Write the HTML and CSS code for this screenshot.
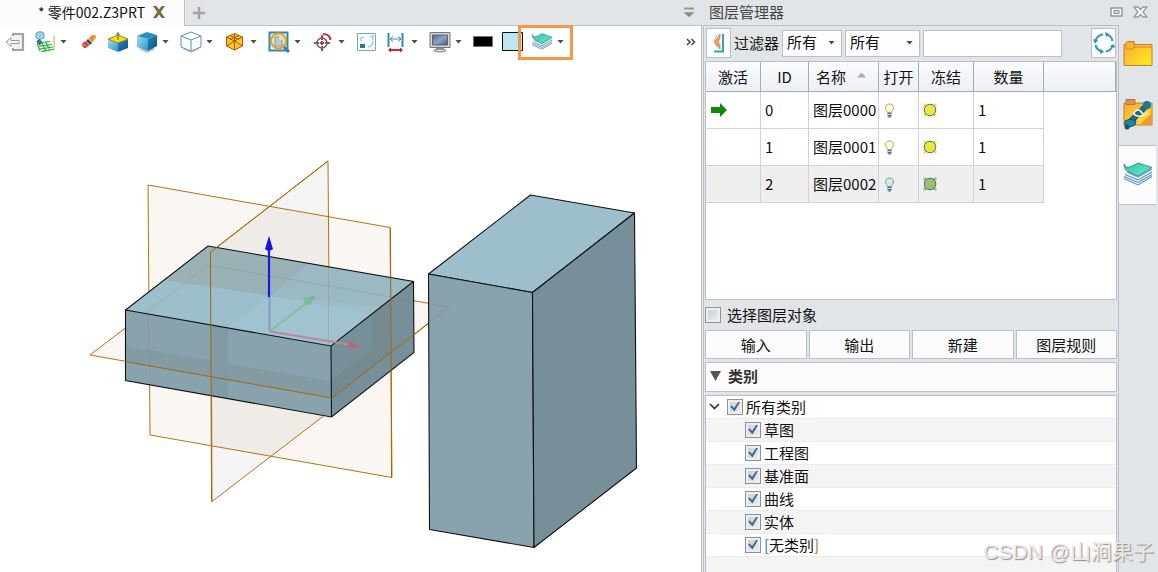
FILE: index.html
```html
<!DOCTYPE html>
<html lang="zh-CN">
<head>
<meta charset="utf-8">
<title>零件002.Z3PRT</title>
<link rel="stylesheet" href="styles.css">
</head>
<body>
<svg class="defs" aria-hidden="true">
  <defs>
    <linearGradient id="gSheet" x1="0" y1="0" x2="1" y2="1"><stop offset="0" stop-color="#2fc4a4"/><stop offset="1" stop-color="#6fe9d0"/></linearGradient>
    <linearGradient id="gFolder" x1="0" y1="0" x2="1" y2="1"><stop offset="0" stop-color="#fca63a"/><stop offset="1" stop-color="#fdee1c"/></linearGradient>
    <linearGradient id="gBlue" x1="0" y1="0" x2="1" y2="1"><stop offset="0" stop-color="#1c86bd"/><stop offset="1" stop-color="#0d5580"/></linearGradient>
    <linearGradient id="gFront" x1="0" y1="0" x2="1" y2="1"><stop offset="0" stop-color="#9fdcf2"/><stop offset="1" stop-color="#2e93c6"/></linearGradient>
    <linearGradient id="gScreen" x1="0" y1="0" x2="1" y2="1"><stop offset="0" stop-color="#4a6290"/><stop offset=".5" stop-color="#8fa3c6"/><stop offset="1" stop-color="#3f5684"/></linearGradient>
    <symbol id="stack" viewBox="0 0 30 24">
      <path d="M1 16l14 7 14-8V7L15 14 4 9z" fill="#e9f5fb"/>
      <path d="M4 10l11 5 14-8M2 12.500l13 5.500 14-8M1 14.500l14 6 14-8M1 16.500l14 6.500 14-8.500" fill="none" stroke="#5b93b5" stroke-width="1.100"/>
      <path d="M1 2c1 3 4 4 7 2.500l7-3.500 14 4.500L15 14 5 9.500C2 8 1 5 1 2z" fill="url(#gSheet)" stroke="#2a7f80" stroke-width=".8"/>
    </symbol>
    <symbol id="bulb" viewBox="0 0 11 15">
      <path d="M3.500 9.500C3.500 8 1.500 7 1.500 4.800c0-2.300 1.500-3.800 4-3.800s4 1.500 4 3.800c0 2.200-2 3.200-2 4.700z"/>
      <path d="M3.500 10h4v3.500h-4z" fill="#5c6787" stroke="none"/><path d="M3.500 11.500h4" stroke="#d5d9e4"/><path d="M4.500 14h2" stroke="#333c55"/>
    </symbol>
    <symbol id="sun" viewBox="0 0 14 14">
      <path d="M.5 .5h3v3h-3zM10.500 .5h3v3h-3zM.5 10.500h3v3h-3zM10.500 10.500h3v3h-3z" stroke="none"/>
      <circle cx="7" cy="7" r="5.800"/>
    </symbol>
  </defs>
</svg>

<main class="editor">
  <header class="tabs">
    <div class="tab"><span>* 零件002.Z3PRT</span>
      <button class="plain" aria-label="关闭标签"><svg width="12" height="12" viewBox="0 0 12 12"><path d="M0 0h3.500L6 3.500 8.500 0H12L7.800 6 12 12H8.500L6 8.500 3.500 12H0l4.200-6z" fill="#7b6c3e"/></svg></button>
    </div>
    <button class="plain tab-add" aria-label="新建标签"><svg width="12" height="12" viewBox="0 0 12 12"><path d="M6 0v12M0 6h12" stroke="#a8a29f" stroke-width="2.500"/></svg></button>
    <button class="plain tab-list" aria-label="标签列表"><svg width="12" height="11" viewBox="0 0 12 11"><path d="M1 1.500h10" stroke="#9a9696" stroke-width="2"/><path d="M1 5.500h10l-5 4.500z" fill="#8c8583" stroke="#aaa5a3"/></svg></button>
  </header>

  <nav class="toolbar" aria-label="工具栏">
    <button class="tool" aria-label="退出"><svg viewBox="0 0 22 22"><path d="M8 5V3h10v16H8v-2" fill="#f1f1f1" stroke="#a2a2a2" stroke-width="2.200"/><path d="M1 11l5-4.500V9.500h8v3H6v3z" fill="#f4f4f4" stroke="#9a9a9a"/></svg></button>
    <button class="tool combo" aria-label="基准面"><svg viewBox="0 0 22 22"><path d="M3 11l13-1 3 9-12 2z" fill="#e8f8e4"/><path d="M3 12l3 8M8 12l4 8.500M12 11.500l4 8M3 12l13-1.500M5 15l13-1.500M6 18l13-2M7 20.500l13-2" stroke="#2caf3c" stroke-width="1.200"/><path d="M20 5v13" stroke="#eebc76" stroke-width="1.500"/><path d="M2 2l4-1.500 4 1.500v5L6 8.500 2 7z" fill="#9fcfe4" stroke="#6aa5c0"/><path d="M4 9l3 4" stroke="#2c718e" stroke-width="4"/></svg><i class="arrow"></i></button>
    <button class="tool" aria-label="擦除"><svg viewBox="0 0 22 22"><path d="M6 12L14 4l4 0v4l-8 8z" fill="#f6c780"/><path d="M11 7L14.500 4 18 5 14 11z" fill="#d99140"/><path d="M9 9l4 4" stroke="#344a74" stroke-width="2.500"/><path d="M4 13l3-3 4 4-3 3c-2 1-4-2-4-4z" fill="#d5383d"/><path d="M5.500 13l2.500 2.500" stroke="#f5c2c2"/></svg></button>
    <button class="tool" aria-label="拉伸"><svg viewBox="0 0 22 22"><path d="M1 8l10 4v9L1 17z" fill="url(#gFront)"/><path d="M11 12l10-4v9l-10 4z" fill="url(#gBlue)"/><path d="M1 8l10-4 10 4-10 4z" fill="#f6de19" stroke="#a58222"/><path d="M11 9V2M9.500 3.500L11 1.500l1.500 2" stroke="#268540" fill="none"/></svg></button>
    <button class="tool combo" aria-label="着色显示"><svg viewBox="0 0 22 22"><path d="M2 18l9 4 9-4-8-2z" fill="#bfc4c6"/><path d="M1 5l11 3v12L1 16z" fill="url(#gFront)"/><path d="M12 8l9-4v11l-9 5z" fill="url(#gBlue)"/><path d="M1 5l10-4 10 3-9 4z" fill="#278fc4"/></svg><i class="arrow"></i></button>
    <button class="tool combo" aria-label="线框显示"><svg viewBox="0 0 22 22"><path d="M2 18l9 4 9-4-8-2z" fill="#c5c9cb"/><path d="M1 5l10-4 10 4v11l-10 4-10-4z" fill="#fbfdff" stroke="#6090af"/><path d="M1 5l10 4 10-4M11 9v11" fill="none" stroke="#6090af"/></svg><i class="arrow"></i></button>
    <button class="tool combo" aria-label="消隐显示"><svg viewBox="0 0 22 22"><path d="M2.500 6l8-3.500L18.500 6v9l-8 4-8-4z" fill="#fbc81f" stroke="#b5521c"/><path d="M2.500 6l8 4 8-4M10.500 2.500V19M2.500 15l8-5 8 5M6 4.500l9 4M15 4.500l-9 4" fill="none" stroke="#b5521c"/></svg><i class="arrow"></i></button>
    <button class="tool combo" aria-label="缩放"><svg viewBox="0 0 22 22"><path d="M1.500 1.500h18v18h-18z" fill="#e5f3f8" stroke="#3187ae" stroke-width="2"/><path d="M15 15l6 6" stroke="#397fa4" stroke-width="3"/><circle cx="10.500" cy="10" r="7.500" fill="#f7e6a4" stroke="#d8a52b" stroke-width="2"/><path d="M7 6h5l2 2v7H7z" fill="#b8c9d8" stroke="#8196ab"/><path d="M12 6v2h2" fill="none" stroke="#fff"/></svg><i class="arrow"></i></button>
    <button class="tool combo" aria-label="旋转中心"><svg viewBox="0 0 22 22"><circle cx="10" cy="12" r="5" fill="none" stroke="#3c6c91" stroke-width="1.500"/><path d="M10 4v5M10 15v5M2 12h5M13 12h5" stroke="#cb3a39" stroke-width="2"/><path d="M8 12h4M10 10v4" stroke="#cb3a39" stroke-width="2"/><path d="M11 3c4 0 7 2 7.500 6" fill="none" stroke="#d12e34" stroke-width="2"/></svg><i class="arrow"></i></button>
    <button class="tool" aria-label="视图"><svg viewBox="0 0 22 22"><path d="M1.500 2.500h18v17h-18z" fill="#fafdff" stroke="#7ba7bf"/><path d="M4 13h5v4H4z" fill="#2c779e"/><path d="M5 10V7l3-1M12 16c3 0 5-3 5-6M14 6l3-1v4" fill="none" stroke="#8dc8da" stroke-width="1.300"/></svg></button>
    <button class="tool combo" aria-label="标注"><svg viewBox="0 0 22 22"><path d="M3.500 2v14M17.500 2v14" stroke="#318ab1" stroke-width="2"/><path d="M5 8h11M8 5.500L5 8l3 2.500M13 5.500L16 8l-3 2.500" fill="none" stroke="#3c91b4"/><path d="M4 19h13" stroke="#d32c31" stroke-width="2"/><path d="M3 19l3-2.500v5zM18 19l-3-2.500v5z" fill="#b32229"/></svg><i class="arrow"></i></button>
    <button class="tool combo" aria-label="显示"><svg viewBox="0 0 22 22"><path d="M1 1.500h20v15H1z" fill="#d5d5d8" stroke="#77777c"/><path d="M3.500 4h15v10h-15z" fill="url(#gScreen)" stroke="#5d6068"/><path d="M7 17h8v2H7z" fill="#929296"/><path d="M5 19.500c3-2 9-2 12 0-3 2-9 2-12 0z" fill="#ddd" stroke="#77777c"/></svg><i class="arrow"></i></button>
    <button class="tool" aria-label="线条颜色"><svg viewBox="0 0 22 22"><path d="M.5 5.500h19v10H.5z" fill="#000" stroke="#777"/></svg></button>
    <button class="tool" aria-label="背景颜色"><svg viewBox="0 0 22 22"><path d="M.5 1.500h20v18H.5z" fill="#bde6f5" stroke="#111"/></svg></button>
    <button class="tool combo layer-tool" aria-label="图层"><svg viewBox="0 0 22 22"><use href="#stack" x="0" y="2" width="22" height="17"/></svg><i class="arrow"></i></button>
    <button class="plain more" aria-label="更多"><svg width="10" height="8" viewBox="0 0 10 8"><path d="M1 1l3 3-3 3M5.500 1l3 3-3 3" fill="none" stroke="#4a4a4a" stroke-width="1.500"/></svg></button>
  </nav>

  <section class="viewport" aria-label="模型视图">
    <svg class="scene" viewBox="0 58 701 514" preserveAspectRatio="xMidYMid meet">
      <path d="M148 185l242 42.500 2 250-242-42.500z" fill="rgb(184,126,69)" fill-opacity=".07"/>
      <path d="M328 161L211 252l1 249.500L330 411z" fill="rgb(105,105,95)" fill-opacity=".07"/>
      <path d="M90 355l118-90 242 42-118 91z" fill="rgb(150,105,69)" fill-opacity=".06"/>
      <g fill="none" stroke="#b37414">
        <path d="M148 185l242 42.500 2 250-242-42.500z"/><path d="M328 161L211 252l1 249.500L330 411z"/><path d="M90 355l118-90 242 42-118 91z"/>
      </g>
      <path d="M208 246l205.500 35.500L331 346 125 310z" fill="#9dbfcb"/>
      <path d="M125.500 310L331 346l.5 71-206-36.500z" fill="#88a3ae"/>
      <path d="M413.500 281.500L331 346l.5 71 82.500-65z" fill="#778f99"/>
      <path d="M208 246l101 18-38 32-107-16z" fill="#9ab1b6"/>
      <path d="M309 264l104 18-32 25-111-10z" fill="#9bb9c3"/>
      <path d="M228 327l42-31 102 18-41 32z" fill="#a0c3cf"/>
      <path d="M125.500 346L331 381v17l-205.500-36z" fill="#839ca4"/>
      <path d="M211 325l17 3v70.500l-17-3z" fill="#819ba4"/>
      <path d="M331 381l41-31v-36l18-14v52l-58.500 46z" fill="#758990"/>
      <g fill="none" stroke="#9c8253" stroke-opacity=".3">
        <path d="M148.500 313l1 70"/><path d="M328.500 267v78"/><path d="M125 329l83-64 206 36"/>
      </g>
      <path d="M208 246l205.500 35.500.5 71-82.500 64.500-206-36.500V310zM125.500 310L331 346l82.500-64.500M331 346l.5 71" fill="none" stroke="#111" stroke-width="1.100"/>
      <g fill="none" stroke="#a2650c">
        <path d="M328 161L210.500 252l1 249.500"/><path d="M390.500 227.500l1 250"/><path d="M125 361.500l207 36.500 96-74.500"/>
      </g>
      <path d="M269.500 297v34" stroke="#8798d2" stroke-width="2"/>
      <path d="M269 249v48" stroke="#1717f0" stroke-width="2.200"/><path d="M269 236l-4 13c2 2 6 2 8 0z" fill="#1414df"/>
      <path d="M270 331l38-29" stroke="#7fc29b" stroke-width="2"/><path d="M305 299l10-3-6 8z" fill="#729e8d"/><circle cx="308" cy="301" r="4" fill="#7dbd91"/>
      <path d="M270 331.500l79 13" stroke="#b78b98" stroke-width="2.200"/><path d="M349 341l13 6.500-15 1z" fill="#a77079"/>
      <g stroke="#111" stroke-width="1.100" stroke-linejoin="round">
        <path d="M428.500 274l102-79 104 18-102 79.500z" fill="#9dbfcb"/>
        <path d="M428.500 274l104 18.500 1.500 255-104.500-18z" fill="#88a3ae"/>
        <path d="M634.500 213l2 255L534 547.500l-1.500-255z" fill="#778f99"/>
      </g>
      <path d="M429 303.500l20 3.500-20 16" fill="none" stroke="#8c9385"/>
    </svg>
  </section>
</main>

<aside class="manager">
  <header class="manager-title">
    <h1>图层管理器</h1>
    <button class="plain" aria-label="还原"><svg width="13" height="10" viewBox="0 0 13 10"><path d="M1 1h11v8H1z" fill="#f6f6f6" stroke="#999" stroke-width="1.500"/><path d="M4 3.500h5v3H4z" fill="#ddd" stroke="#888"/></svg></button>
    <button class="plain" aria-label="关闭"><svg width="15" height="12" viewBox="0 0 15 12"><path d="M1 1h4l2.500 2.500L10 1h4l-4 5 4 5h-4L7.500 8.500 5 11H1l4-5z" fill="#fbfbfb" stroke="#999" stroke-width="1.300"/></svg></button>
  </header>

  <div class="manager-main">
    <form class="filters">
      <button type="button" class="icon-button" aria-label="收起"><svg width="12" height="20" viewBox="0 0 12 20"><path d="M7 1L2 9l5 7V12L5 9l2-4z" fill="#f0a36f" stroke="#c97743" stroke-width=".8"/><path d="M4 2L1 8.500 4 14" fill="none" stroke="#dda074"/><path d="M10 1v17M1 18.500h10" stroke="#25a4c9" stroke-width="2"/></svg></button>
      <label for="filter-type">过滤器</label>
      <span class="select"><select id="filter-type"><option>所有</option></select></span>
      <span class="select wide"><select aria-label="过滤范围"><option>所有</option></select></span>
      <input class="search" type="text" aria-label="过滤文本">
      <button type="button" class="icon-button refresh" aria-label="刷新"><svg width="22" height="22" viewBox="0 0 22 22"><path d="M10 2.500C6 3 3 6 2.500 9M2.500 13C3 16 6 19 9 19.500M13 19.500c3-.5 6-3 6.500-6M19.500 9c-.5-3-3-6-6-6.500" fill="none" stroke="#3aa3c5" stroke-width="2.400"/><path d="M0 7l5 1-3 4zM8 17l3 3-4 2zM17 14l4-2 1 4zM12 0l4 2-3 3z" fill="#3491b3"/></svg></button>
    </form>

    <div class="grid">
      <table>
        <colgroup><col class="c-active"><col class="c-id"><col class="c-name"><col class="c-open"><col class="c-freeze"><col class="c-count"><col></colgroup>
        <thead><tr><th>激活</th><th>ID</th><th class="sorted">名称<i class="sort"></i></th><th>打开</th><th>冻结</th><th>数量</th><th></th></tr></thead>
        <tbody>
          <tr><td><svg width="16" height="14" viewBox="0 0 16 14"><path d="M0 4h9V0l7 7-7 7v-4H0z" fill="#11890f"/></svg></td><td>0</td><td>图层0000</td><td><svg class="bulb" width="11" height="15"><use href="#bulb"/></svg></td><td><svg class="sun" width="14" height="14"><use href="#sun"/></svg></td><td>1</td><td></td></tr>
          <tr><td></td><td>1</td><td>图层0001</td><td><svg class="bulb" width="11" height="15"><use href="#bulb"/></svg></td><td><svg class="sun" width="14" height="14"><use href="#sun"/></svg></td><td>1</td><td></td></tr>
          <tr class="selected"><td></td><td>2</td><td>图层0002</td><td><svg class="bulb off" width="11" height="15"><use href="#bulb"/></svg></td><td><svg class="sun off" width="14" height="14"><use href="#sun"/></svg></td><td>1</td><td></td></tr>
        </tbody>
      </table>
    </div>

    <label class="pick"><input type="checkbox">选择图层对象</label>

    <div class="actions"><button>输入</button><button>输出</button><button>新建</button><button>图层规则</button></div>

    <button class="section-head"><i class="fold"></i>类别</button>

    <ul class="tree">
      <li class="root"><svg width="11" height="7" viewBox="0 0 11 7"><path d="M1 1l4.500 4.500L10 1" fill="none" stroke="#333" stroke-width="1.700"/></svg><label><input type="checkbox" checked>所有类别</label></li>
      <li><label><input type="checkbox" checked>草图</label></li>
      <li><label><input type="checkbox" checked>工程图</label></li>
      <li><label><input type="checkbox" checked>基准面</label></li>
      <li><label><input type="checkbox" checked>曲线</label></li>
      <li><label><input type="checkbox" checked>实体</label></li>
      <li><label><input type="checkbox" checked><span><span class="open-mark">[</span>无类别<span class="close-mark">]</span></span></label></li>
    </ul>
  </div>

  <nav class="side-tabs" aria-label="管理器">
    <button aria-label="文件"><svg width="30" height="28" viewBox="0 0 30 28"><path d="M1 25.500V4.500h3l1-3h6l1 3h17v21z" fill="url(#gFolder)" stroke="#cf7b32"/><path d="M3 2h8v6l-2 1H5L3 8z" fill="#fbb72e" stroke="#d98a2c"/><path d="M11 7h18" stroke="#d98535"/></svg></button>
    <button aria-label="零件库"><svg width="30" height="32" viewBox="0 0 30 32"><path d="M1 5h28v22H1z" fill="url(#gFolder)" stroke="#c97a25"/><path d="M16 27l13-12v12z" fill="#ef9a2e"/><path d="M3 1.500h9v5H3z" fill="#dc9253" stroke="#b8723a"/><path d="M5 26L24 7" stroke="#155b7a" stroke-width="6"/><path d="M6 25L23 8" stroke="#32627f" stroke-width="3"/><circle cx="24" cy="7" r="4" fill="#1479a5"/><path d="M2 23l5-2 6 2-1 4-5 2-5-1z" fill="#1788ae" stroke="#0f536f"/><circle cx="4" cy="29" r="2.500" fill="#14516c"/><path d="M12 14c1-3 5-3 7 1 1 3 4 2 5-1M11 14c-1 3 5 6 9 3" fill="none" stroke="#def1f7" stroke-width="1.800"/></svg></button>
    <button class="current" aria-label="图层"><svg width="30" height="24"><use href="#stack"/></svg></button>
  </nav>
</aside>
<div class="watermark">CSDN @山涧果子</div>
</body>
</html>
```
FILE: styles.css
```css
:root {
  --chrome: #e1e5e8;
  --line: #b9c0c9;
  --cell: #cfd1dc;
}
* { box-sizing: border-box; }
body {
  margin: 0;
  display: flex;
  height: 100vh;
  overflow: hidden;
  position: relative;
  background: var(--chrome);
  color: #111;
  font: 15px/20px "Noto Sans CJK SC", "Noto Sans", sans-serif;
}
button, input, select { font: inherit; color: inherit; margin: 0; }
button { padding: 0; border: 0; background: none; }
svg { display: block; flex: none; }
.defs { position: absolute; width: 0; height: 0; }
.plain { display: flex; align-items: center; }

/* editor */
.editor { flex: 1; min-width: 0; display: flex; flex-direction: column; }
.tabs { display: flex; height: 26px; flex: none; border-bottom: 1px solid var(--line); }
.tab {
  display: flex;
  align-items: center;
  gap: 8px;
  height: 26px;
  width: 185px;
  padding: 0 0 2px 38px;
  background: #fcfcfc;
  border-right: 1px solid var(--line);
  font-size: 14px;
  white-space: nowrap;
}
.tab-add { margin-left: 8px; }
.tab-list { margin: 0 7px 0 auto; }
.toolbar {
  display: flex;
  align-items: center;
  gap: 7px;
  height: 32px;
  flex: none;
  padding: 0 5px 1px;
  background: #fff;
  border-right: 1px solid var(--line);
}
.tool { display: flex; align-items: center; gap: 4px; position: relative; }
.tool svg { width: 22px; height: 22px; }
.combo { padding-right: 3px; }
.arrow { width: 7px; height: 4px; background: #4b4b4b; clip-path: polygon(0 0, 100% 0, 50% 100%); margin-right: 1px; }
.layer-tool::after {
  content: "";
  position: absolute;
  inset: -6px -5px -7px -13px;
  border: 3px solid #f79646;
}
.more { margin-left: auto; }
.viewport { flex: 1; min-height: 0; background: #fff; border-right: 1px solid var(--line); }
.scene { width: 100%; height: 100%; }

/* manager */
.manager {
  width: 456px;
  flex: none;
  display: grid;
  grid-template: 25px minmax(0, 1fr) / minmax(0, 1fr) 39px;
}
.manager-title { grid-column: 1 / -1; display: flex; align-items: center; gap: 10px; padding: 0 10px 2px 7px; }
.manager-title h1 { margin: 0 auto 0 0; font-size: 15px; font-weight: 400; color: #444; }
.manager-main {
  display: flex;
  flex-direction: column;
  margin-left: 1px;
  padding: 1px 1px 0;
  border: solid var(--line);
  border-width: 1px 1px 0;
}
.filters { display: flex; align-items: center; gap: 3px; height: 32px; margin-bottom: 2px; padding: 0 1px; }
.icon-button {
  display: flex;
  align-items: center;
  justify-content: center;
  width: 25px;
  height: 30px;
  background: #fcfcfc;
  border: 1px solid var(--line);
}
.refresh { margin-left: auto; }
.select { position: relative; width: 60px; }
.select.wide { width: 75px; }
.select::after {
  content: "";
  position: absolute;
  right: 7px;
  top: 11px;
  width: 7px;
  height: 4px;
  background: #4b4b4b;
  clip-path: polygon(0 0, 100% 0, 50% 100%);
}
.select select {
  display: block;
  appearance: none;
  width: 100%;
  height: 27px;
  padding: 0 4px 2px;
  line-height: 20px;
  background: #fdfdfd;
  border: 1px solid var(--line);
  border-radius: 0;
}
.search { width: 139px; height: 27px; background: #fff; border: 1px solid var(--line); }

.grid { height: 239px; flex: none; background: #fff; border: 1px solid var(--line); }
table { width: 100%; table-layout: fixed; border-collapse: separate; border-spacing: 0; }
.c-active { width: 55px; }
.c-id { width: 48px; }
.c-name { width: 70px; }
.c-open { width: 40px; }
.c-freeze { width: 55px; }
.c-count { width: 70px; }
th {
  height: 30px;
  padding: 0;
  font-weight: 400;
  background: linear-gradient(#fafbfd, #eceff3);
  border: solid #a3abb9;
  border-width: 0 1px 1px 0;
}
.sorted { padding-left: 7px; text-align: left; }
.sort {
  display: inline-block;
  width: 9px;
  height: 5px;
  margin: 0 0 5px 11px;
  background: #a5a9b2;
  clip-path: polygon(50% 0, 100% 100%, 0 100%);
}
td { height: 37px; padding: 0 0 0 4px; border: solid var(--cell); border-width: 0 1px 1px 0; white-space: nowrap; }
td:first-child { padding-left: 5px; }
td:last-child { border: 0; }
.selected td:not(:last-child) { background: #efefef; }
.bulb { margin-left: 1px; fill: #fffde8; stroke: #b9a83a; }
.bulb.off { fill: #d5e9e4; stroke: #6f9c93; }
.sun { fill: #f3e33a; stroke: #2679b5; }
.sun.off { fill: #a4bd68; stroke: #2377a5; }

.pick { display: flex; align-items: center; gap: 6px; height: 30px; }
input[type="checkbox"] {
  appearance: none;
  display: grid;
  place-items: center;
  flex: none;
  width: 16px;
  height: 16px;
  background: linear-gradient(135deg, #c3ccd5, #eef1f4);
  border: 1px solid #8f9194;
  box-shadow: inset 0 0 0 2px #eceef0;
}
input[type="checkbox"]:checked::before {
  content: "";
  width: 10px;
  height: 10px;
  background: #426990;
  clip-path: polygon(0 50%, 20% 40%, 40% 65%, 85% 0, 100% 5%, 45% 100%);
}
.actions { display: grid; grid-template-columns: repeat(4, 1fr); gap: 2px; }
.actions button { height: 29px; background: #fcfcfc; border: 1px solid var(--line); }
.section-head {
  display: flex;
  align-items: center;
  gap: 7px;
  height: 30px;
  flex: none;
  margin: 3px 0;
  padding: 0 0 2px 4px;
  background: #fcfcfc;
  border: 1px solid var(--line);
  font-size: 15px;
  font-weight: 700;
  color: #333;
}
.fold { width: 11px; height: 10px; background: #50555e; clip-path: polygon(0 0, 100% 0, 50% 100%); }
.tree {
  flex: 1;
  min-height: 0;
  margin: 0;
  padding: 0;
  list-style: none;
  border: solid var(--line);
  border-width: 1px 1px 0;
  background: repeating-linear-gradient(#fff 0 22px, #ececec 22px 23px, #f4f4f4 23px 45px, #ececec 45px 46px);
}
.tree li { display: flex; align-items: center; height: 23px; padding: 0 0 2px 39px; }
.tree .root { gap: 7px; padding-left: 3px; }
.tree label { display: flex; align-items: center; gap: 3px; }
.open-mark { color: #1b75bc; }
.close-mark { color: #c46a12; }

.side-tabs { display: flex; flex-direction: column; padding-right: 2px; }
.side-tabs button { display: flex; align-items: center; justify-content: center; height: 60px; padding-bottom: 3px; }
.side-tabs .current { background: #fcfcfc; border: solid var(--line); border-width: 1px 0; }

.watermark {
  position: absolute;
  right: 4px;
  bottom: 4px;
  font: 21px/32px "Liberation Sans", "Noto Sans CJK SC", sans-serif;
  color: #e9e9e9;
  text-shadow: 1px 1px 1px #8d8d8d;
  pointer-events: none;
}
```
